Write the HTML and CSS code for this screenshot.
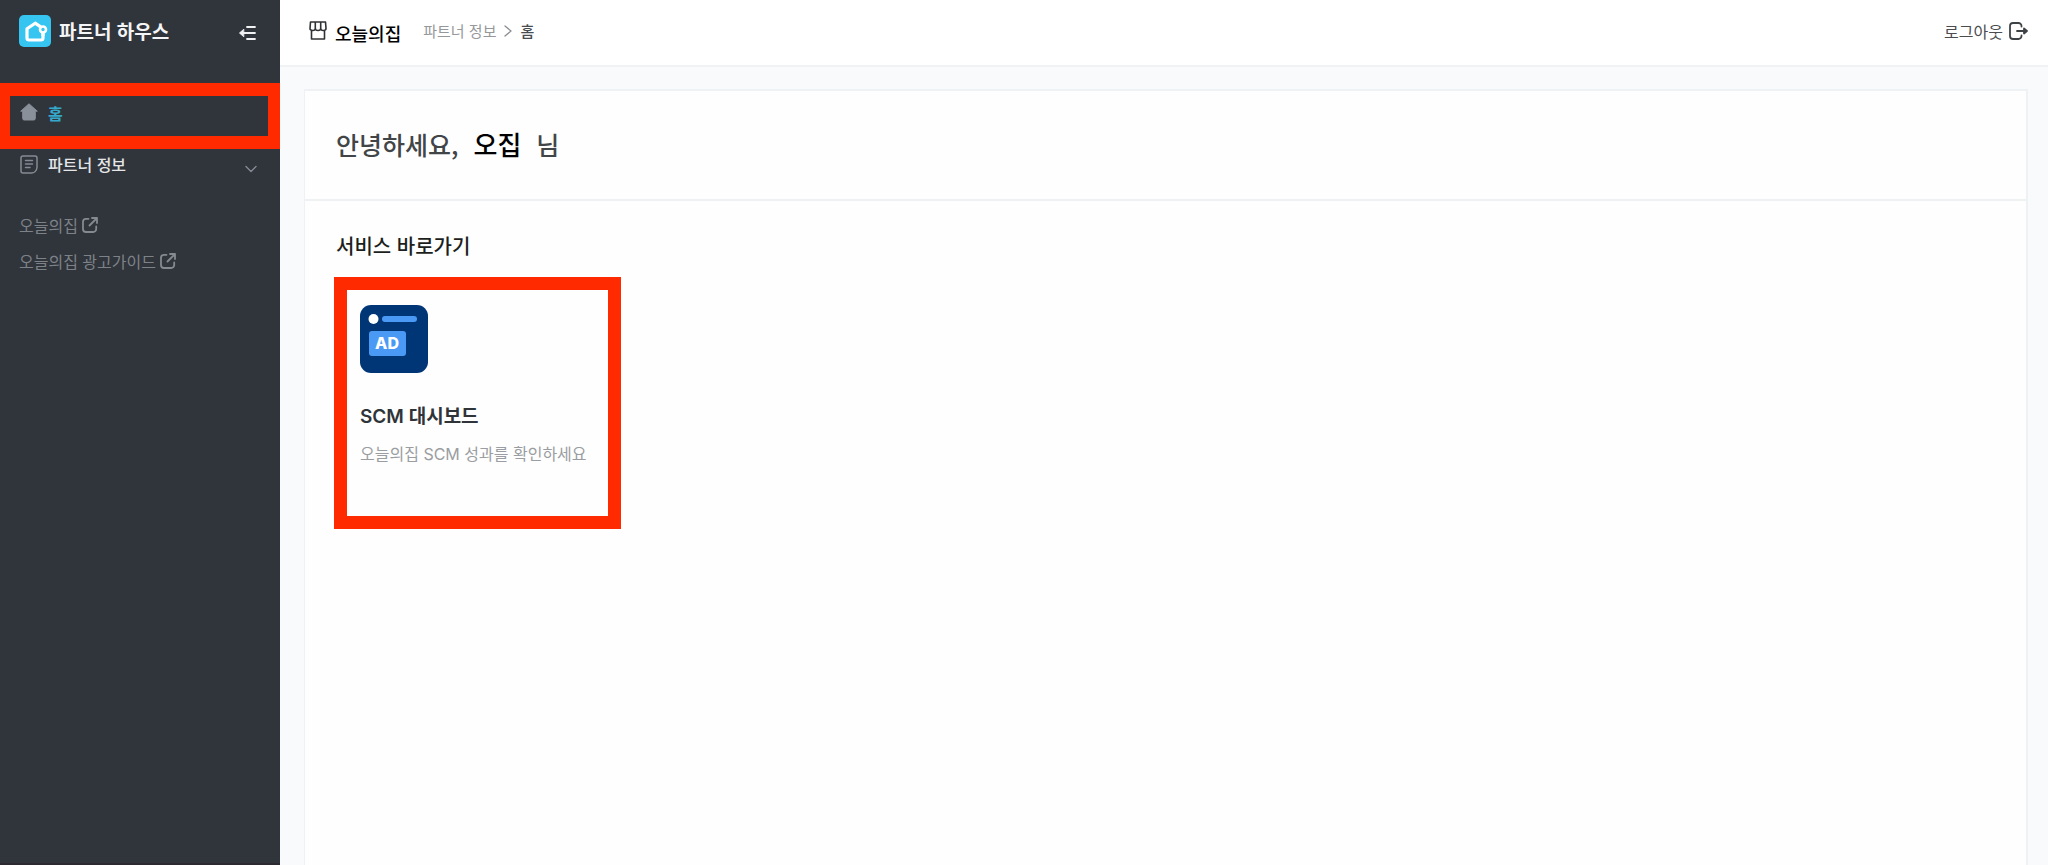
FILE: index.html
```html
<!DOCTYPE html>
<html lang="ko">
<head>
<meta charset="utf-8">
<title>파트너 하우스</title>
<link rel="stylesheet" href="styles.css">
</head>
<body>
<div class="app">
  <aside class="sidebar">
    <div class="brand">
      <svg class="brand-logo" viewBox="0 0 32 32" aria-hidden="true">
        <rect width="32" height="32" rx="5" fill="#35c5f0"/>
        <path d="M21.3 11.6 16.2 8.2 8 13.8V23a2 2 0 0 0 2 2h12a2 2 0 0 0 2-2v-4.5" fill="none" stroke="#fff" stroke-width="3.2" stroke-linecap="round" stroke-linejoin="round"/>
        <circle cx="24" cy="14.5" r="3" fill="none" stroke="#fff" stroke-width="2.6"/>
        <path d="M24 18v3" stroke="#fff" stroke-width="3.2"/>
      </svg>
      <span class="brand-name">파트너 하우스</span>
      <button class="icon-button" type="button" aria-label="메뉴 접기">
        <svg width="18" height="16" viewBox="0 0 18 16" fill="none" stroke="#f0f1f3" stroke-width="1.8" stroke-linecap="round" stroke-linejoin="round"><path d="M9 2h8M3 8h14M9 14h8"/><path d="M5.500 4.500 1.500 8l4 3.500z" fill="#f0f1f3" stroke-width="1"/></svg>
      </button>
    </div>
    <nav class="menu" aria-label="주 메뉴">
      <a class="menu-home" href="#" aria-current="page">
        <svg width="18" height="18" viewBox="0 0 18 18"><path d="M9 .8.7 8.200h2v7.300a1.500 1.500 0 0 0 1.500 1.500h9.600a1.500 1.500 0 0 0 1.500-1.500V8.200h2z" fill="#8a9099" stroke="#8a9099" stroke-width="1" stroke-linejoin="round"/></svg>
        <span>홈</span>
      </a>
      <button class="menu-group" type="button" aria-expanded="false">
        <svg width="18" height="19" viewBox="0 0 18 19" fill="none" stroke="#858b94" stroke-width="1.500" stroke-linecap="round" stroke-linejoin="round"><path d="M3 1h12a2 2 0 0 1 2 2v9.500c-.5 3.500-2 5.200-5.200 5.500H3a2 2 0 0 1-2-2V3a2 2 0 0 1 2-2z"/><path d="M5.500 5.500h7M5.500 9h7M5.500 12.500h4.500"/></svg>
        <span>파트너 정보</span>
        <svg class="menu-chevron" width="12" height="8" viewBox="0 0 12 8" fill="none" stroke="#858b94" stroke-width="1.400" stroke-linecap="round" stroke-linejoin="round"><path d="m1 1.500 5 5 5-5"/></svg>
      </button>
    </nav>
    <div class="links">
      <a href="#">오늘의집
        <svg width="16" height="16" viewBox="0 0 16 16" fill="none" stroke="#858a91" stroke-width="1.800" stroke-linecap="round" stroke-linejoin="round"><path d="M6.500 1.800H4a3 3 0 0 0-3 3V12a3 3 0 0 0 3 3h7.200a3 3 0 0 0 3-3V9.500M10 1h5v5M15 1 7.500 8.500"/></svg>
      </a>
      <a href="#">오늘의집 광고가이드
        <svg width="16" height="16" viewBox="0 0 16 16" fill="none" stroke="#858a91" stroke-width="1.800" stroke-linecap="round" stroke-linejoin="round"><path d="M6.500 1.800H4a3 3 0 0 0-3 3V12a3 3 0 0 0 3 3h7.200a3 3 0 0 0 3-3V9.500M10 1h5v5M15 1 7.500 8.500"/></svg>
      </a>
    </div>
  </aside>
  <div class="page">
    <header class="topbar">
      <svg width="18" height="19" viewBox="0 0 18 19" fill="none" stroke="#2f3235" stroke-width="1.600" stroke-linejoin="round"><path d="M1.500 1h15l.5 6.500c0 1.300-1 2-2.700 2S11.700 8.800 11.700 7.500c0 1.300-1.200 2-2.700 2s-2.700-.7-2.700-2c0 1.300-1.100 2-2.600 2S1 8.800 1 7.500zM6.300 1v6.500M11.700 1v6.500M2.500 9.500V18h13V9.500"/></svg>
      <strong class="store">오늘의집</strong>
      <nav class="crumbs" aria-label="현재 위치">
        <a href="#">파트너 정보</a>
        <svg width="8" height="12" viewBox="0 0 8 12" fill="none" stroke="#8a8d91" stroke-width="1.300" stroke-linecap="round" stroke-linejoin="round"><path d="m1 1 6 5-6 5"/></svg>
        <span class="crumb-current">홈</span>
      </nav>
      <button class="logout" type="button">로그아웃
        <svg width="19" height="18" viewBox="0 0 19 18" fill="none" stroke="#3f4245" stroke-width="1.800" stroke-linecap="round" stroke-linejoin="round"><path d="M12.500 4.500V4a3 3 0 0 0-3-3H4a3 3 0 0 0-3 3v10a3 3 0 0 0 3 3h5.500a3 3 0 0 0 3-3v-.5M8 9h9"/><path d="M15 6.500 18 9l-3 2.500z" fill="#3f4245"/></svg>
      </button>
    </header>
    <main class="content">
      <div class="panel">
        <h1 class="greeting"><span>안녕하세요,</span><strong>오집</strong><span>님</span></h1>
        <section class="services">
          <h2>서비스 바로가기</h2>
          <a class="service" href="#">
            <svg width="68" height="68" viewBox="0 0 68 68" aria-hidden="true">
              <rect width="68" height="68" rx="11" fill="#003676"/>
              <circle cx="13.500" cy="14" r="5" fill="#fff"/>
              <rect x="22" y="11" width="35" height="6" rx="3" fill="#4a9af5"/>
              <rect x="9" y="26" width="37" height="25" rx="3" fill="#4a9af5"/>
              <text class="ad-label" x="27" y="44" text-anchor="middle">AD</text>
            </svg>
            <strong>SCM 대시보드</strong>
            <span>오늘의집 SCM 성과를 확인하세요</span>
          </a>
        </section>
      </div>
    </main>
  </div>
</div>
</body>
</html>
```
FILE: styles.css
```css
* { box-sizing: border-box; }

body {
  margin: 0;
  color: #2f3438;
  font: 16px/24px "Noto Sans CJK KR", sans-serif;
}

a { color: inherit; text-decoration: none; }

button {
  padding: 0;
  border: 0;
  background: none;
  color: inherit;
  font: inherit;
  cursor: pointer;
}

svg { display: block; flex: none; }

.app { display: flex; min-height: 100vh; }

/* Sidebar */
.sidebar {
  flex: none;
  width: 280px;
  border-bottom: 2px solid #2d2930;
  background: #30343b;
}

.brand {
  display: flex;
  align-items: center;
  gap: 8px;
  height: 83px;
  padding: 0 24px 22px 19px;
}

.brand-logo { width: 32px; height: 32px; }

.brand-name {
  color: #f4f5f6;
  font-size: 19px;
  font-weight: 700;
}

.icon-button { margin: 4px 0 0 auto; }

.menu-home {
  display: flex;
  gap: 10px;
  height: 66px;
  padding: 7px 10px;
  border: solid #ff2a00;
  border-width: 13px 12px 13px 10px;
  color: #35a9cc;
  font-weight: 700;
}

.menu-home span { line-height: 20px; }

.menu-group {
  display: flex;
  align-items: center;
  gap: 10px;
  width: 100%;
  height: 30px;
  padding: 0 23px 0 20px;
  color: #e4e6e8;
  font-weight: 500;
}

.menu-chevron { margin: 10px 0 0 auto; }

.links {
  display: grid;
  justify-items: start;
  gap: 12px;
  padding: 34px 19px;
  color: #7d8288;
}

.links a { display: flex; align-items: center; gap: 4px; }

/* Page */
.page {
  display: flex;
  flex: 1;
  flex-direction: column;
  min-width: 0;
  background: #f8fafc;
}

.topbar {
  display: flex;
  align-items: center;
  height: 67px;
  padding: 0 20px 4px 29px;
  border-bottom: 2px solid #f0f2f4;
  background: #fff;
}

.store {
  margin-left: 8px;
  padding-top: 4px;
  color: #000;
  font-size: 18px;
  font-weight: 500;
}

.crumbs {
  display: flex;
  align-items: center;
  gap: 8px;
  margin-left: 22px;
  color: #95989b;
  font-size: 15px;
}

.crumb-current { color: #4a4d50; font-weight: 500; }

.logout {
  display: flex;
  align-items: center;
  gap: 6px;
  margin-left: auto;
  color: #4a4d50;
}

.content {
  display: flex;
  flex: 1;
  padding: 22px 20px 0 24px;
}

.panel {
  flex: 1;
  border: solid #eff2f4;
  border-width: 2px 2px 0 1px;
  background: #fefefe;
}

.greeting {
  display: flex;
  align-items: center;
  gap: 15px;
  height: 110px;
  margin: 0;
  padding: 0 31px 2px;
  border-bottom: 2px solid #eff2f3;
  color: #424548;
  font-size: 25px;
  font-weight: 500;
}

.greeting strong { color: #000; font-size: 26px; font-weight: 500; }

.services { padding: 33px 29px; }

.services h2 {
  margin: 0 0 19px 2px;
  color: #1c1e20;
  font-size: 20px;
  font-weight: 500;
}

.service {
  display: flex;
  flex-direction: column;
  align-items: start;
  width: 287px;
  height: 252px;
  padding: 15px 13px;
  border: 13px solid #ff2a00;
  font-family: Inter, "Noto Sans CJK KR", sans-serif;
}

.service strong {
  margin: 32px 0 13px;
  font-size: 19px;
  font-weight: 600;
}

.service span { color: #9a9da1; white-space: nowrap; }

.ad-label {
  fill: #fff;
  font: 800 16px Inter, sans-serif;
}
```
